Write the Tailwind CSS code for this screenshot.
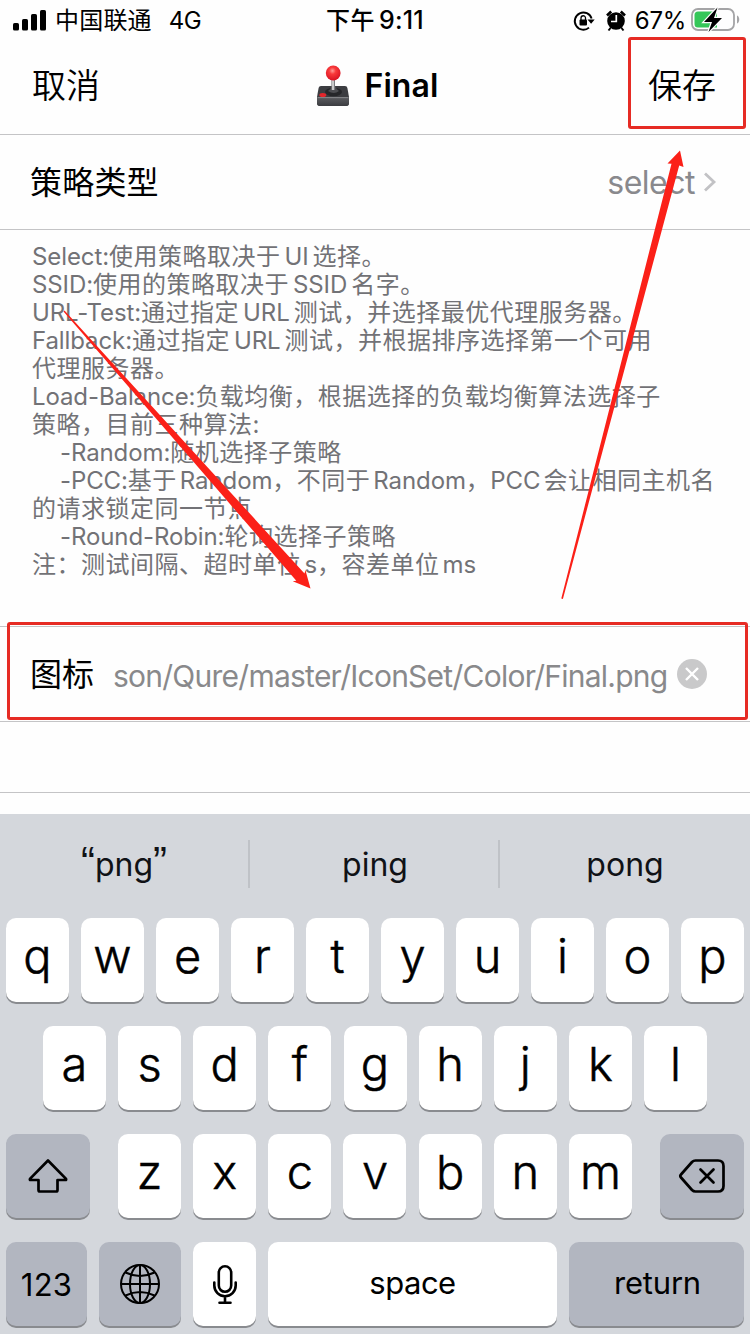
<!DOCTYPE html>
<html lang="zh-CN">
<head>
<meta charset="utf-8">
<title>Final</title>
<script src="https://cdn.jsdelivr.net/npm/@tailwindcss/browser@4"></script>
</head>
<body class="bg-[#fefefe]">
<main class="relative flex h-[1334px] w-[750px] flex-col overflow-hidden bg-[#fefefe] font-['Inter','Noto_Sans_CJK_SC',sans-serif] text-black whitespace-nowrap">

  <!-- status bar -->
  <header class="grid h-10 grid-cols-3 items-center pl-[13px] pr-[10px] pt-px text-[24px] leading-none">
    <div class="flex items-center">
      <svg class="mr-[8px] mb-[2px] h-[22px] w-[34px]" viewBox="0 0 34 22"><rect x="0" y="14" width="6" height="7.5" rx="1.6"/><rect x="9" y="10" width="6" height="11.5" rx="1.6"/><rect x="18" y="5" width="6" height="16.5" rx="1.6"/><rect x="27" y="1" width="6" height="20.500" rx="1.6"/></svg>
      <span class="tracking-[0.2px]">中国联通</span><span class="ml-[17px] tracking-[-0.5px]">4G</span>
    </div>
    <div class="flex items-center justify-center pr-[3px] font-medium"><span class="tracking-[0.5px]">下午</span><span class="ml-[4px] text-[25px] tracking-[0.2px]">9:11</span></div>
    <div class="flex items-center justify-end">
      <svg class="h-[22px] w-[22px]" viewBox="0 0 22 22"><path d="M18.600 8.500A8.600 8.600 0 1 0 16 17.600" fill="none" stroke="#000" stroke-width="1.900"/><path d="M14.500 9.500h7.200l-3.600 4.300z"/><rect x="6.500" y="9.600" width="7.500" height="6" rx="1"/><path d="M8 10V8a2.250 2.250 0 0 1 4.500 0v2" fill="none" stroke="#000" stroke-width="1.300"/></svg>
      <svg class="ml-[11px] h-[22px] w-[20px]" viewBox="0 0 20 22"><circle cx="10" cy="11" r="8.800"/><path d="M1 5.500 5.200 1.500M19 5.500 14.800 1.500" stroke="#000" stroke-width="2.600"/><path d="M4.500 18 2.500 20.500M15.500 18l2 2.500" stroke="#000" stroke-width="2"/><path d="M10.300 5v6.500H5" fill="none" stroke="#fff" stroke-width="1.700"/></svg>
      <span class="ml-[9px] tracking-[-0.3px]">67%</span>
      <svg class="ml-[5px] mb-px h-[26px] w-[49px]" viewBox="0 0 49 26"><rect x="1" y="2" width="42" height="21" rx="6" fill="none" stroke="#a4a4a6" stroke-width="1.800"/><path d="M46 8.500c3 1 3 7 0 8z" fill="#a4a4a6"/><path d="M7 4.500h19v16H7a3.500 3.500 0 0 1-3.500-3.500V8A3.500 3.500 0 0 1 7 4.500z" fill="#35c759"/><path d="M26.500.5 13 15h8l-3.500 10L31 11h-8z" fill="#000" stroke="#fefefe" stroke-width="2.400" paint-order="stroke"/></svg>
    </div>
  </header>

  <!-- navigation -->
  <nav class="grid h-[95px] grid-cols-3 items-center border-b border-[#c4c4c6] pl-8 pr-[34px] pb-[3px] text-[34px] leading-none">
    <span class="font-[350]">取消</span>
    <h1 class="flex items-center justify-center pl-[7px] text-[32px] font-semibold">
      <svg class="mr-[14px] h-[42px] w-[34px]" viewBox="0 0 34 42">
        <defs>
          <radialGradient id="ball" cx=".45" cy=".35" r=".65"><stop offset="0" stop-color="#ff9b96"/><stop offset=".35" stop-color="#f93a3b"/><stop offset="1" stop-color="#d81323"/></radialGradient>
          <linearGradient id="rod"><stop offset="0" stop-color="#77787a"/><stop offset=".45" stop-color="#eee"/><stop offset="1" stop-color="#55565a"/></linearGradient>
          <linearGradient id="front" x2="0" y2="1"><stop offset="0" stop-color="#5b5c60"/><stop offset="1" stop-color="#3b3c40"/></linearGradient>
        </defs>
        <path d="M5 21h24q2 0 2.400 2l1.600 9v6q0 3-3 3H4q-3 0-3-3v-6l1.600-9Q3 21 5 21z" fill="#3c3d41"/>
        <path d="M1 32.500h32V38q0 3-3 3H4q-3 0-3-3z" fill="url(#front)"/>
        <path d="M1.500 32.600h31" stroke="#88898d" stroke-width="1"/>
        <ellipse cx="17.500" cy="27" rx="8.500" ry="4.200" fill="#26272a"/>
        <path d="M12 26q3-2 3.500-5h4q.5 3 3.500 5-5 4-11 0z" fill="#4d4e52"/>
        <rect x="15.400" y="13" width="3.600" height="12" fill="url(#rod)"/>
        <ellipse cx="6.800" cy="30" rx="3.500" ry="2" fill="#e3262c"/>
        <circle cx="17.200" cy="8" r="7.400" fill="url(#ball)"/>
      </svg>
      <span class="tracking-[0.1px]">Final</span>
    </h1>
    <span class="text-right font-[350]">保存</span>
  </nav>

  <!-- policy type -->
  <section class="flex h-[95px] items-center justify-between border-b border-[#c4c4c6] pl-[30px] pr-[33px] pt-px text-[32px] leading-none">
    <span class="tracking-[0.2px]">策略类型</span>
    <span class="flex items-center text-[#89898d]"><span class="tracking-[-0.5px]">select</span>
      <svg class="ml-[8px] mb-px h-[22px] w-[14px]" viewBox="0 0 14 22"><path d="M2 2.500 11 11 2 19.500" fill="none" stroke="#c2c2c5" stroke-width="2.800"/></svg></span>
  </section>

  <!-- description -->
  <section class="h-[396px] pl-8 pt-[13px] text-[24px] leading-[28px] tracking-[0.5px] text-[#727276] [&_span]:tracking-[-0.1px]">
    <p class="h-7"><span>Select:</span>使用策略取决于<span class="mx-[4px]">UI</span>选择。</p>
    <p class="h-7"><span>SSID:</span>使用的策略取决于<span class="mx-[4px]">SSID</span>名字。</p>
    <p class="h-7"><span>URL-Test:</span>通过指定<span class="mx-[4px]">URL</span>测试，并选择最优代理服务器。</p>
    <p class="h-7"><span>Fallback:</span>通过指定<span class="mx-[4px]">URL</span>测试，并根据排序选择第一个可用</p>
    <p class="h-7">代理服务器。</p>
    <p class="h-7"><span>Load-Balance:</span>负载均衡，根据选择的负载均衡算法选择子</p>
    <p class="h-7">策略，目前三种算法:</p>
    <p class="h-7 pl-[28px]"><span>-Random:</span>随机选择子策略</p>
    <p class="h-7 pl-[28px]"><span>-PCC:</span>基于<span class="ml-[3px]">Random</span>，不同于<span class="ml-[3px]">Random</span>，<span class="mr-[3px]">PCC</span>会让相同主机名</p>
    <p class="h-7">的请求锁定同一节点</p>
    <p class="h-7 pl-[28px]"><span>-Round-Robin:</span>轮询选择子策略</p>
    <p class="h-7">注：测试间隔、超时单位<span class="ml-[3px]">s</span>，容差单位<span class="ml-[3px]">ms</span></p>
  </section>

  <!-- icon address -->
  <section class="flex h-24 items-center border-y border-[#c4c4c6] pl-[30px] text-[32px] leading-none">
    <span class="pt-[2px]">图标</span>
    <span class="ml-[19px] w-[554px] pt-[3px] text-[30px] tracking-[-0.75px] text-[#89898b]">son/Qure/master/IconSet/Color/Final.png</span>
    <svg class="ml-[10px] h-[30px] w-[30px]" viewBox="0 0 30 30"><circle cx="15" cy="15" r="15" fill="#c9c9ca"/><path d="m9 9 12 12M21 9 9 21" stroke="#fff" stroke-width="2.400"/></svg>
  </section>
  <section class="h-[71px] border-b border-[#c4c4c6]"></section>

  <!-- keyboard -->
  <section class="mt-[21px] flex h-[520px] flex-col bg-[#d4d7dc]">
    <div class="grid h-[104px] grid-cols-3 pt-[26px] text-[32px] leading-[50px] text-[#101216]">
      <div class="h-12 border-r-2 border-[#bfc2c7] text-center"><span class="font-['Liberation_Sans',sans-serif] text-[42px] leading-none">“</span>png<span class="font-['Liberation_Sans',sans-serif] text-[42px] leading-none">”</span></div>
      <div class="h-12 border-r-2 border-[#bfc2c7] pl-[2px] text-center">ping</div>
      <div class="h-12 text-center">pong</div>
    </div>
    <div class="flex flex-col gap-6 text-[47px] font-light leading-[76px] [&_kbd]:block [&_kbd]:h-[84px] [&_kbd]:rounded-[10px] [&_kbd]:text-center [&_kbd]:font-['Inter',sans-serif] [&_kbd]:shadow-[0_2px_0_#898b8f]">
      <div class="flex justify-between px-[6px] [-webkit-text-stroke:0.5px_#000]">
        <kbd class="w-[63px] bg-white">q</kbd><kbd class="w-[63px] bg-white">w</kbd><kbd class="w-[63px] bg-white">e</kbd><kbd class="w-[63px] bg-white">r</kbd><kbd class="w-[63px] bg-white">t</kbd><kbd class="w-[63px] bg-white">y</kbd><kbd class="w-[63px] bg-white">u</kbd><kbd class="w-[63px] bg-white">i</kbd><kbd class="w-[63px] bg-white">o</kbd><kbd class="w-[63px] bg-white">p</kbd>
      </div>
      <div class="flex justify-between px-[43px] [-webkit-text-stroke:0.5px_#000]">
        <kbd class="w-[63px] bg-white">a</kbd><kbd class="w-[63px] bg-white">s</kbd><kbd class="w-[63px] bg-white">d</kbd><kbd class="w-[63px] bg-white">f</kbd><kbd class="w-[63px] bg-white">g</kbd><kbd class="w-[63px] bg-white">h</kbd><kbd class="w-[63px] bg-white">j</kbd><kbd class="w-[63px] bg-white">k</kbd><kbd class="w-[63px] bg-white">l</kbd>
      </div>
      <div class="flex px-[6px] [-webkit-text-stroke:0.5px_#000]">
        <kbd class="w-[84px] bg-[#b2b6c0] pt-[22px]"><svg class="mx-auto h-[40px] w-[44px]" viewBox="0 0 44 40"><path d="M22 4.500 39.800 22.600q1 1.400-.6 1.400H31.500v10q0 1.500-1.500 1.500H14q-1.500 0-1.500-1.500V24H4.800q-1.600 0-.6-1.400z" fill="none" stroke="#000" stroke-width="2.700" stroke-linejoin="round"/></svg></kbd>
        <div class="mx-[28px] flex flex-1 justify-between">
          <kbd class="w-[63px] bg-white">z</kbd><kbd class="w-[63px] bg-white">x</kbd><kbd class="w-[63px] bg-white">c</kbd><kbd class="w-[63px] bg-white">v</kbd><kbd class="w-[63px] bg-white">b</kbd><kbd class="w-[63px] bg-white">n</kbd><kbd class="w-[63px] bg-white">m</kbd>
        </div>
        <kbd class="w-[84px] bg-[#b2b6c0] pt-[22px]"><svg class="mx-auto h-[40px] w-[48px]" viewBox="0 0 48 40"><path d="M17.500 4.500H40q5.500 0 5.500 5.500v20q0 5.500-5.500 5.500H17.500q-2 0-3.500-1.500L3 21.500q-1.400-1.500 0-3L14 6q1.500-1.500 3.500-1.500z" fill="none" stroke="#000" stroke-width="2.700"/><path d="m22.500 13.500 13 13M35.500 13.500l-13 13" stroke="#000" stroke-width="2.700" stroke-linecap="round"/></svg></kbd>
      </div>
      <div class="flex gap-3 px-[6px] text-[31px] font-normal leading-[82px] tracking-[-0.5px]">
        <kbd class="w-[81px] bg-[#b2b6c0] pt-[2px] tracking-[0.2px]">123</kbd>
        <kbd class="w-[82px] bg-[#b2b6c0] pt-[21px]"><svg class="mx-auto h-[42px] w-[42px]" viewBox="0 0 42 42" fill="none" stroke="#000" stroke-width="2"><circle cx="21" cy="21" r="19"/><ellipse cx="21" cy="21" rx="10" ry="19"/><path d="M21 2v38M2 21h38M6.500 9.500q14.500 7 29 0M6.500 32.500q14.500-7 29 0"/></svg></kbd>
        <kbd class="w-[63px] bg-white pt-[22px]"><svg class="mx-auto h-[42px] w-[26px]" viewBox="0 0 26 42" fill="none" stroke="#000" stroke-width="2.600" stroke-linecap="round"><rect x="6.800" y="2.300" width="12.400" height="25.500" rx="6.200"/><path d="M2.300 18.500v3a10.700 10.700 0 0 0 21.400 0v-3M13 32.500v6M7.500 38.700h11"/></svg></kbd>
        <kbd class="w-[289px] bg-white">space</kbd>
        <kbd class="w-[175px] bg-[#b2b6c0] pl-[2px] tracking-[-0.2px]">return</kbd>
      </div>
    </div>
  </section>

  <!-- annotations over the page -->
  <svg class="absolute inset-0 h-[1334px] w-[750px]" viewBox="0 0 750 1334" fill="none">
    <rect x="629.500" y="38.500" width="115" height="89" rx="1.500" stroke="#e62b24" stroke-width="3"/>
    <rect x="8.500" y="623.500" width="738" height="95" rx="1.500" stroke="#e62b24" stroke-width="3"/>
    <path d="M63.500 311.500 64.500 310.500 304.500 573.500 305.400 569.900 310.500 588.500 292.700 581.300 296.300 580.700z" fill="#fb2018"/>
    <path d="M561.300 598.500 671.500 163.800 667.500 163.500 680 150.500 683.500 167 679.200 165.500 562.900 599z" fill="#fb2018"/>
  </svg>
</main>
</body>
</html>
